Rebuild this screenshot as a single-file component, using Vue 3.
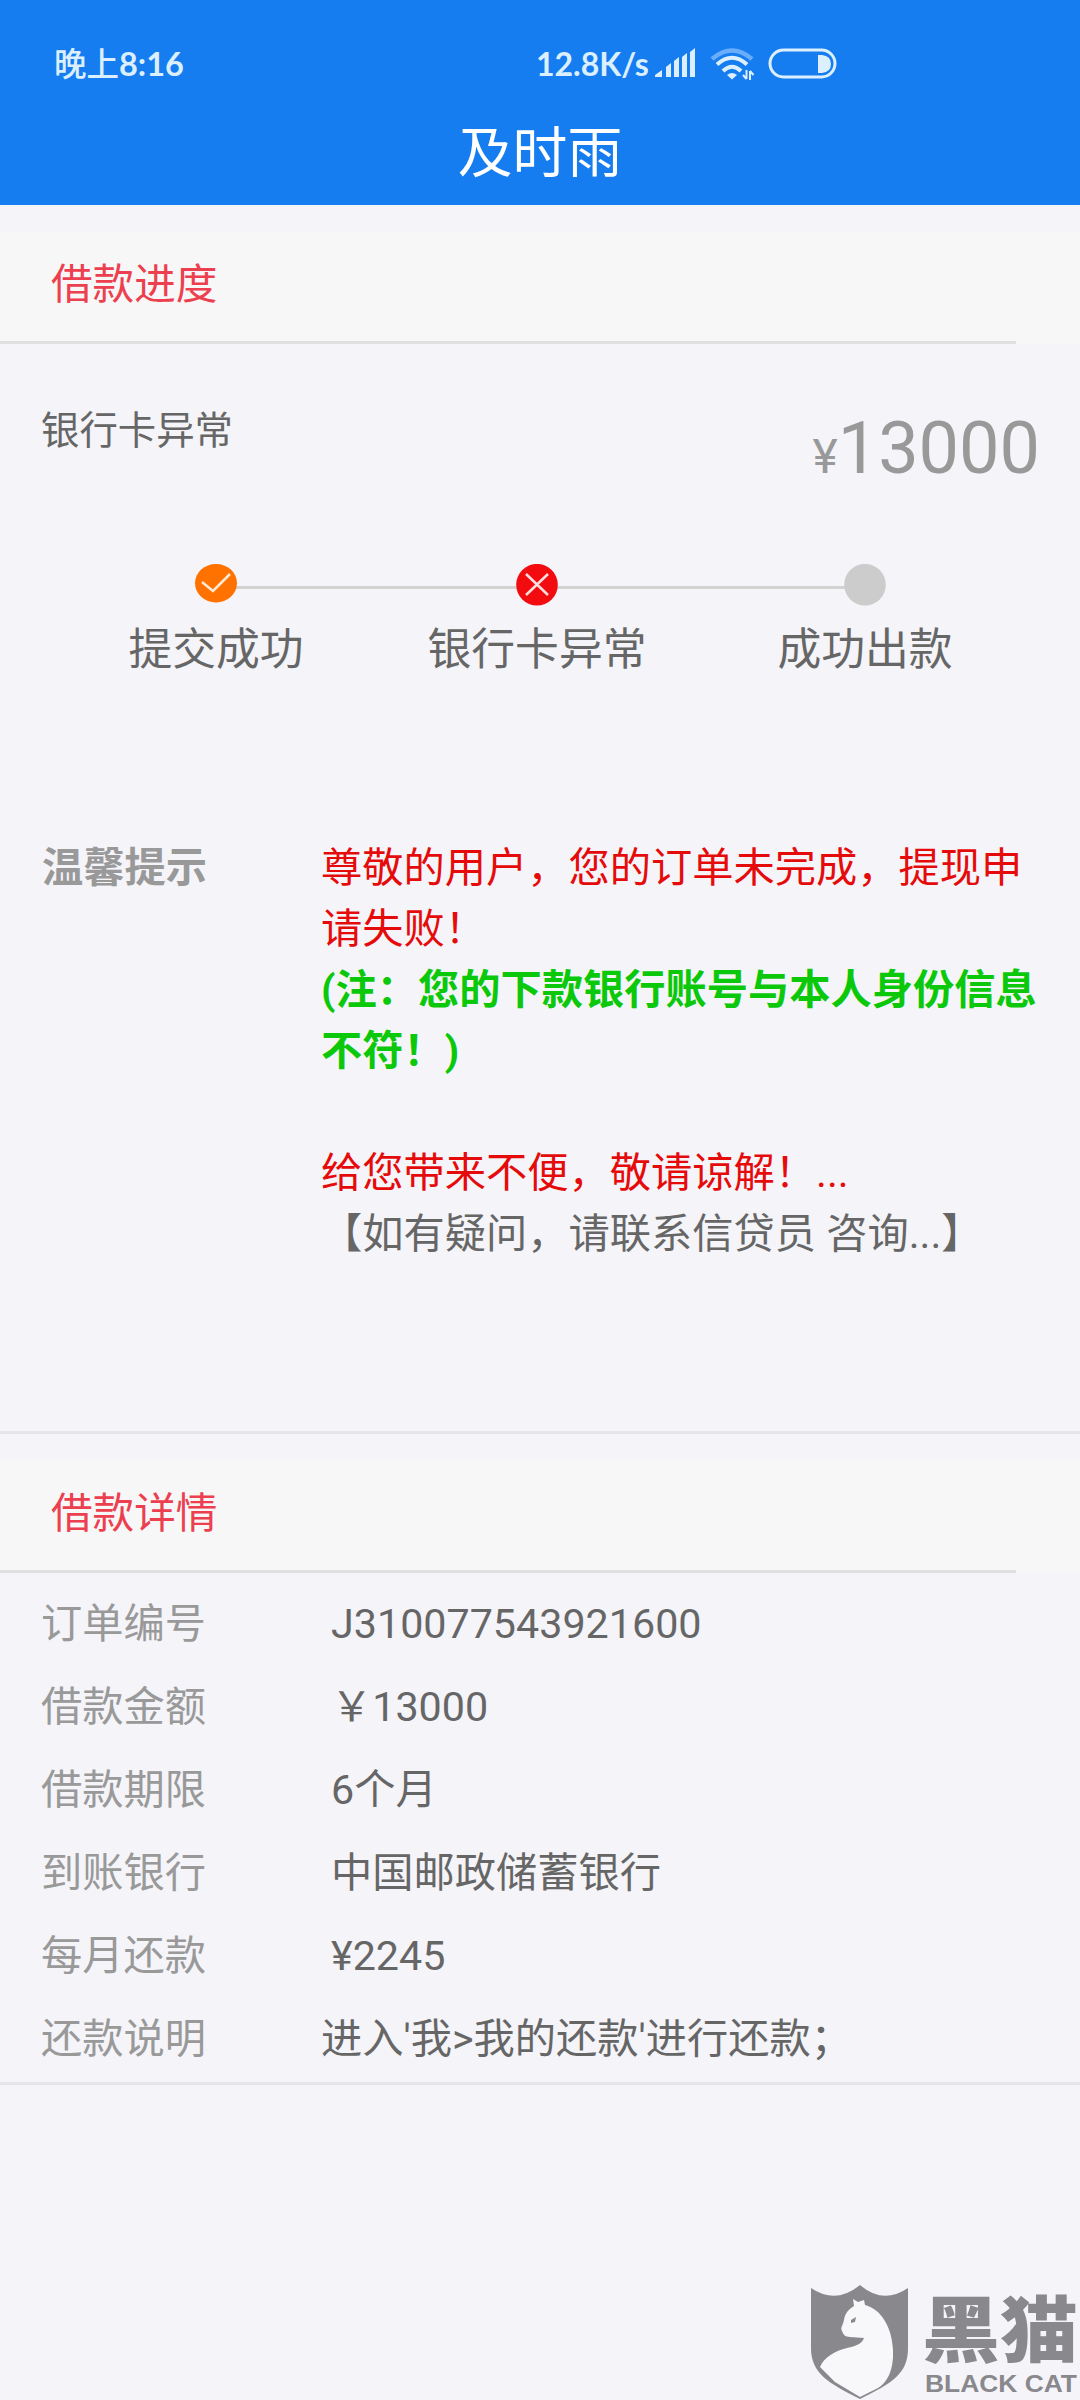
<template>
    <div class="page">
        <header class="header">
            <div class="status">
                <span class="status__time">晚上<b>8:16</b></span>
                <span class="status__speed">12.8K/s</span>
                <svg class="status__icons" width="184" height="34" viewBox="0 0 184 34" fill="none">
                    <path
                        d="M1 30v-2l7-5v7zM12 30V20l5-4v14zM20 30V14l5-4v20zM28 30V10l5-4v24zM36 30V5l5-4v29z"
                        fill="#dcefff" />
                    <path d="M58 12Q78-5 98 12" stroke="#69adfc" stroke-width="4.500" />
                    <path d="M63 17.500Q78 4 93 17.500M69 24Q78 15.500 87 24" stroke="#dcefff" stroke-width="4" />
                    <path d="M73 28Q78 24 83 28L78 32.500z" fill="#dcefff" />
                    <path d="M92.500 32v-9m-3.500 5l3.500 4M96 33v-9m0 0l3.500 4" stroke="#dcefff" stroke-width="2" />
                    <rect x="116" y="3" width="65" height="27" rx="13.500" stroke="#dcefff" stroke-width="3" />
                    <path d="M164 8h4q9 1 9 9t-9 9h-4z" fill="#dcefff" />
                </svg>
            </div>
            <h1 class="header__title">及时雨</h1>
        </header>

        <section class="progress">
            <h2 class="section-title">借款进度</h2>
            <div class="summary">
                <span class="summary__state">银行卡异常</span>
                <span class="summary__amount"><small>¥</small>13000</span>
            </div>
            <ol class="steps">
                <li v-for="step in steps" :key="step.label" :class="['step', `step--${step.status}`]">
                    <svg class="step__icon" width="42" height="42" viewBox="0 0 42 42" fill="none">
                        <ellipse v-if="step.status === 'done'" cx="21" cy="19.200" rx="21" ry="19.200" fill="#ff7200" />
                        <circle v-else cx="21" cy="20.700" r="20.800" :fill="step.status === 'error' ? '#f20c0f' : '#ccc'" />
                        <path v-if="step.status === 'done'" d="M7 18l11 9 17-17" stroke="#ffe9d2" stroke-width="2.500" />
                        <path v-if="step.status === 'error'" d="M10 10l22 21M32 10L10 31" stroke="#ffdede"
                            stroke-width="2.500" />
                    </svg>
                    <span class="step__label">{{ step.label }}</span>
                </li>
            </ol>
            <div class="tips">
                <strong class="tips__label">温馨提示</strong>
                <div class="tips__text">
                    <p class="tips__red">尊敬的用户，您的订单未完成，提现申<br>请失败！</p>
                    <p class="tips__green">(注：您的下款银行账号与本人身份信息<br>不符！)</p>
                    <p class="tips__red tips__red--spaced">给您带来不便，敬请谅解！...</p>
                    <p>【如有疑问，请联系信贷员 咨询...】</p>
                </div>
            </div>
        </section>

        <section class="details">
            <h2 class="section-title">借款详情</h2>
            <dl class="details__list">
                <div v-for="row in rows" :key="row.label" class="row">
                    <dt class="row__label">{{ row.label }}</dt>
                    <dd :class="['row__value', row.flush ? 'row__value--flush' : null]">{{ row.value }}</dd>
                </div>
            </dl>
        </section>

        <svg class="watermark" width="272" height="148" viewBox="0 -30 272 148">
            <path d="M3 6Q28 23 52 3Q75 23 100 6V66C100 92 84 101 52 117C20 101 3 91 3 66z" fill="#89888d" />
            <path
                d="M45 17l5 3 6-2 1 5C73 27 84 45 85 68C86 88 79 101 70 106L52 115 27 100 12 85C16 75 27 69 39 66C48 64 54 62 56 56L42 55C37 55 35 52 34 49C32 46 35 43 36 38C37 31 41 27 46 24z"
                fill="#f8f8fb" />
            <path d="M43 38l5-3-1 5-4 1z" fill="#89888d" />
            <text class="watermark__cn" x="114" y="74" textLength="156" lengthAdjust="spacingAndGlyphs">黑猫</text>
            <text class="watermark__en" x="117" y="110" textLength="152" lengthAdjust="spacingAndGlyphs">BLACK CAT</text>
        </svg>
    </div>
</template>

<script setup>
const steps = [
    { label: '提交成功', status: 'done' },
    { label: '银行卡异常', status: 'error' },
    { label: '成功出款', status: 'pending' }
]

const rows = [
    { label: '订单编号', value: 'J310077543921600' },
    { label: '借款金额', value: '￥13000' },
    { label: '借款期限', value: '6个月' },
    { label: '到账银行', value: '中国邮政储蓄银行' },
    { label: '每月还款', value: '¥2245' },
    { label: '还款说明', value: "进入'我>我的还款'进行还款；", flush: true }
]
</script>

<style>
body {
    margin: 0;
    background-color: #f4f4f9;
}
</style>

<style scoped>
.page {
    position: relative;
    box-sizing: border-box;
    width: 1080px;
    height: 2400px;
    overflow: hidden;
    background-color: #f4f4f9;
    color: #666;
    font-family: Roboto, "Noto Sans CJK SC", sans-serif;
    font-size: 41.25px;
}

h1,
h2,
p,
ol,
dl,
dd {
    margin: 0;
    padding: 0;
    font-weight: 400;
}

.header {
    height: 205px;
    background-color: #167df0;
    color: #fff;
}

.status {
    display: flex;
    align-items: center;
    height: 104px;
    padding: 24px 0 0 54px;
    box-sizing: border-box;
    color: #dcefff;
    font-family: Lato, "Noto Sans CJK SC", sans-serif;
    font-size: 32px;
    font-weight: 700;
    line-height: 40px;
}

.status__time {
    width: 482px;
    font-size: 32.500px;
    font-weight: 500;
}

.status__time b {
    font-weight: 700;
}

.status__speed {
    width: 118px;
}

.header__title {
    font-size: 54.800px;
    line-height: 99px;
    text-align: center;
}

.section-title {
    height: 112px;
    box-sizing: border-box;
    padding-left: 51px;
    background: linear-gradient(#e0e0e0, #e0e0e0) left bottom / 1016px 3px no-repeat, #f7f7f7;
    color: #ec3f4f;
    font-size: 41.600px;
    line-height: 106px;
}

.progress {
    height: 1229px;
    box-sizing: border-box;
    padding-top: 27px;
    border-bottom: 3px solid #e6e6e9;
}

.summary {
    display: flex;
    justify-content: space-between;
    height: 220px;
    box-sizing: border-box;
    padding: 58px 40px 0 41px;
}

.summary__state {
    font-size: 38.400px;
    line-height: 58px;
}

.summary__amount {
    color: #999;
    font-size: 72px;
    line-height: 94px;
}

.summary__amount small {
    font-size: 48px;
}

.steps {
    display: flex;
    justify-content: space-between;
    height: 258px;
    padding: 0 105px 0 106px;
    background: linear-gradient(#d2d2d2, #d2d2d2) 216px 22px / 649px 3px no-repeat;
    list-style: none;
}

.step {
    display: flex;
    flex-direction: column;
    align-items: center;
    width: 220px;
}

.step--error {
    margin-right: 7px;
}

.step__icon {
    display: block;
}

.step__label {
    margin-top: 14px;
    font-size: 43.800px;
    line-height: 60px;
    white-space: nowrap;
}

.tips {
    display: flex;
    padding-left: 42px;
    padding-top: 16px;
    line-height: 61px;
}

.tips__label {
    width: 279px;
    color: #999;
    font-weight: 700;
}

.tips__text {
    white-space: nowrap;
}

.tips__red {
    color: #e60b0b;
}

.tips__red--spaced {
    margin-top: 61px;
}

.tips__green {
    color: #0bc80b;
    font-weight: 700;
}

.details {
    padding-top: 27px;
    border-bottom: 3px solid #e6e6e9;
}

.details__list {
    height: 509px;
    padding-top: 10px;
    box-sizing: border-box;
}

.row {
    display: flex;
    height: 83px;
    padding-left: 41px;
    line-height: 83px;
}

.row__label {
    width: 280px;
    color: #999;
}

.row__value {
    padding-left: 10px;
}

.row__value--flush {
    padding-left: 0;
}

.watermark {
    position: absolute;
    right: 0;
    bottom: 0;
    fill: #89888d;
}

.watermark__cn {
    font-family: "Noto Sans CJK SC", sans-serif;
    font-size: 72px;
    font-weight: 900;
}

.watermark__en {
    font-family: "Liberation Sans", sans-serif;
    font-size: 23px;
    font-weight: 700;
}
</style>
